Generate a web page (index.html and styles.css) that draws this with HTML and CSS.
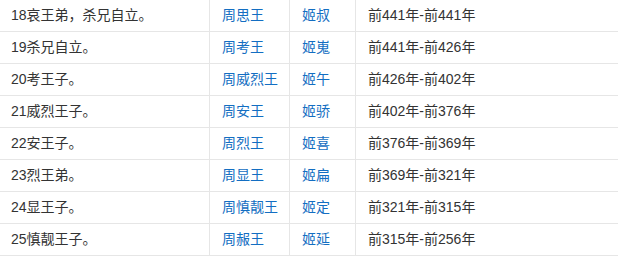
FILE: index.html
```html
<!DOCTYPE html>
<html lang="zh-CN">
<head>
<meta charset="utf-8">
<title>周王表</title>
<link rel="stylesheet" href="styles.css">
</head>
<body>
<table class="kings">
  <colgroup>
    <col class="c-note">
    <col class="c-title">
    <col class="c-name">
    <col class="c-years">
  </colgroup>
  <tbody>
    <tr><td>18哀王弟，杀兄自立。</td><td><a href="#">周思王</a></td><td><a href="#">姬叔</a></td><td>前441年-前441年</td></tr>
    <tr><td>19杀兄自立。</td><td><a href="#">周考王</a></td><td><a href="#">姬嵬</a></td><td>前441年-前426年</td></tr>
    <tr><td>20考王子。</td><td><a href="#">周威烈王</a></td><td><a href="#">姬午</a></td><td>前426年-前402年</td></tr>
    <tr><td>21威烈王子。</td><td><a href="#">周安王</a></td><td><a href="#">姬骄</a></td><td>前402年-前376年</td></tr>
    <tr><td>22安王子。</td><td><a href="#">周烈王</a></td><td><a href="#">姬喜</a></td><td>前376年-前369年</td></tr>
    <tr><td>23烈王弟。</td><td><a href="#">周显王</a></td><td><a href="#">姬扁</a></td><td>前369年-前321年</td></tr>
    <tr><td>24显王子。</td><td><a href="#">周慎靓王</a></td><td><a href="#">姬定</a></td><td>前321年-前315年</td></tr>
    <tr><td>25慎靓王子。</td><td><a href="#">周赧王</a></td><td><a href="#">姬延</a></td><td>前315年-前256年</td></tr>
  </tbody>
</table>
</body>
</html>
```

FILE: styles.css
```css
html, body {
  margin: 0;
  padding: 0;
  background: #ffffff;
}

.kings {
  width: 618px;
  table-layout: fixed;
  border-collapse: separate;
  border-spacing: 0;
  font-family: "Liberation Sans", "Noto Sans CJK SC", sans-serif;
  font-size: 14px;
  color: #333333;
}

.c-note { width: 210px; }
.c-title { width: 80px; }
.c-name { width: 66px; }
.c-years { width: 262px; }

.kings td {
  box-sizing: border-box;
  height: 32px;
  padding: 0 12px;
  line-height: 31px;
  border-bottom: 1px solid #e6e6e6;
  border-right: 1px solid #e6e6e6;
  white-space: nowrap;
  vertical-align: middle;
}

.kings td:first-child {
  padding-left: 11px;
}

.kings td:last-child {
  border-right: none;
}

.kings a {
  color: #136ec2;
  text-decoration: none;
}
```
